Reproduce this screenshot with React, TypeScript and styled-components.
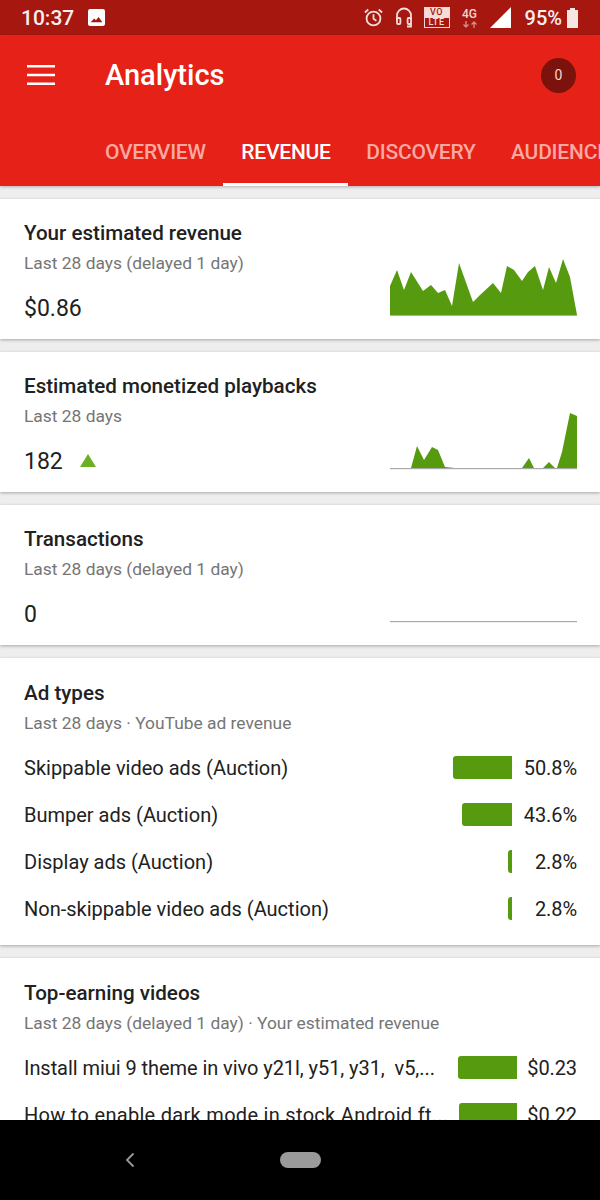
import React from 'react'
import styled, {createGlobalStyle} from 'styled-components'

const GlobalStyle = createGlobalStyle`
  html, body {
    margin: 0;
    padding: 0;
    background: #000;
  }
  * {
    box-sizing: border-box;
  }
`

const GREEN = '#569a10'

const revenuePoints = '0,31 7,15 14,35 21,17 33,36 41,30 48,38 55,35 62,51 69,8 83,47 90,40 103,28 111,38 117,11 124,15 132,26 138,17 145,11 153,35 159,12 166,28 173,4 180,22 187,60 0,60'
const playbackPoints = '21,60 27,38 34,52 42,39 48,42 55,59 65,60 21,60 132,60 139,50 144,60 132,60 153,60 159,54 165,60 153,60 167,60 172,44 180,5 187,8 187,60 167,60'

const adTypes = [
  {name: 'Skippable video ads (Auction)', width: 59, value: '50.8%'},
  {name: 'Bumper ads (Auction)', width: 50, value: '43.6%'},
  {name: 'Display ads (Auction)', width: 4, value: '2.8%'},
  {name: 'Non-skippable video ads (Auction)', width: 4, value: '2.8%'},
]

const videos = [
  {name: 'Install miui 9 theme in vivo y21l, y51, y31,  v5,...', width: 59, value: '$0.23', tracking: -0.06},
  {name: 'How to enable dark mode in stock Android ft...', width: 58, value: '$0.22', tracking: 0.3},
]

export default function App() {
  return <Page>
    <GlobalStyle/>
    <StatusBar>
      <StatusGroup>
        <Clock>10:37</Clock>
        <svg width="17" height="17" viewBox="0 0 16 16">
          <path fill="#fff" fillRule="evenodd" d="M2 0h12a2 2 0 0 1 2 2v12a2 2 0 0 1-2 2H2a2 2 0 0 1-2-2V2a2 2 0 0 1 2-2zM2.500 12.500h11L10 7.500l-2.500 3.200-1.700-1.700z"/>
        </svg>
      </StatusGroup>
      <StatusIcons>
        <svg width="21" height="21" viewBox="0 0 20 20" fill="none" stroke="#f3dcd9" strokeWidth="1.7">
          <circle cx="10" cy="11" r="6.600"/>
          <path d="M10 7v4.200l2.800 1.800M1.800 5.200 5 2.400M18.200 5.200 15 2.400"/>
        </svg>
        <svg width="18" height="22" viewBox="0 0 18 22" fill="none" stroke="#f3dcd9" strokeWidth="1.8">
          <path d="M2 13V8.500a7 7 0 0 1 14 0V13"/>
          <rect x="2" y="11" width="3.400" height="6" rx="1"/>
          <rect x="12.600" y="11" width="3.400" height="6" rx="1"/>
          <path d="M16 16v3.500h-4"/>
        </svg>
        <Volte>
          <VolteTop>VO</VolteTop>
          <VolteBottom>LTE</VolteBottom>
        </Volte>
        <Network>
          <span>4G</span>
          <svg width="16" height="7" viewBox="0 0 16 7" fill="none" stroke="#cf8d86" strokeWidth="1.4">
            <path d="M4 0v6M1.500 3.500 4 6l2.500-2.500M12 7V1M9.500 3.500 12 1l2.500 2.500"/>
          </svg>
        </Network>
        <svg width="21" height="21" viewBox="0 0 21 21">
          <path fill="#fff" d="M21 0v21H0z"/>
        </svg>
        <Battery>
          <span>95%</span>
          <svg width="11" height="20" viewBox="0 0 11 20">
            <path fill="#f5e6e4" d="M3 0h5v2h3v18H0V2h3z"/>
          </svg>
        </Battery>
      </StatusIcons>
    </StatusBar>

    <Header>
      <TitleRow>
        <MenuIcon width="28" height="20" viewBox="0 0 28 20">
          <path fill="#fff" d="M0 0h28v2.600H0zM0 8.700h28v2.600H0zM0 17.400h28V20H0z"/>
        </MenuIcon>
        <Title>Analytics</Title>
        <Badge>0</Badge>
      </TitleRow>
      <Tabs>
        <Tab>OVERVIEW</Tab>
        <Tab $active>REVENUE</Tab>
        <Tab>DISCOVERY</Tab>
        <Tab>AUDIENCE</Tab>
      </Tabs>
    </Header>

    <Content>
      <Card>
        <CardText>
          <CardTitle>Your estimated revenue</CardTitle>
          <CardSub>Last 28 days (delayed 1 day)</CardSub>
          <CardValue>$0.86</CardValue>
        </CardText>
        <Chart width="187" height="62" viewBox="0 0 187 62">
          <polygon fill={GREEN} points={revenuePoints}/>
          <rect y="60" width="187" height="1" fill="#9dc46f"/>
        </Chart>
      </Card>

      <Card>
        <CardText>
          <CardTitle>Estimated monetized playbacks</CardTitle>
          <CardSub>Last 28 days</CardSub>
          <CardValue>
            182
            <Trend width="16" height="13" viewBox="0 0 16 13">
              <path fill="#6ab023" d="M8 0l8 13H0z"/>
            </Trend>
          </CardValue>
        </CardText>
        <Chart width="187" height="62" viewBox="0 0 187 62">
          <rect y="60" width="187" height="1.200" fill="#aaa"/>
          <polygon fill={GREEN} points={playbackPoints}/>
        </Chart>
      </Card>

      <Card>
        <CardText>
          <CardTitle>Transactions</CardTitle>
          <CardSub>Last 28 days (delayed 1 day)</CardSub>
          <CardValue>0</CardValue>
        </CardText>
        <Chart width="187" height="62" viewBox="0 0 187 62">
          <rect y="60" width="187" height="1.200" fill="#aaa"/>
        </Chart>
      </Card>

      <ListCard>
        <CardTitle>Ad types</CardTitle>
        <CardSub>Last 28 days · YouTube ad revenue</CardSub>
        <List>
          {adTypes.map(item => <Row key={item.name}>
            <RowName>{item.name}</RowName>
            <Bar style={{width: item.width}}/>
            <RowValue>{item.value}</RowValue>
          </Row>)}
        </List>
      </ListCard>

      <ListCard>
        <CardTitle>Top-earning videos</CardTitle>
        <CardSub>Last 28 days (delayed 1 day) · Your estimated revenue</CardSub>
        <List>
          {videos.map(item => <Row key={item.name}>
            <RowName $tracking={item.tracking}>{item.name}</RowName>
            <Bar style={{width: item.width}}/>
            <VideoValue>{item.value}</VideoValue>
          </Row>)}
        </List>
      </ListCard>
    </Content>

    <NavBar>
      <svg width="12" height="16" viewBox="0 0 12 16" fill="none" stroke="#9a9a9a" strokeWidth="1.8">
        <path d="M9.500 1.500 3 8l6.500 6.500"/>
      </svg>
      <HomePill/>
    </NavBar>
  </Page>
}

const Page = styled.div`
  width: 600px;
  height: 1200px;
  display: flex;
  flex-direction: column;
  overflow: hidden;
  background: #eeeeee;
  font-family: Roboto, "Liberation Sans", sans-serif;
  color: #212121;
`

const StatusBar = styled.div`
  height: 35px;
  flex: none;
  padding: 0 22px 0 21px;
  display: flex;
  align-items: center;
  justify-content: space-between;
  background: #a5170f;
  color: #fff;
`

const StatusGroup = styled.div`
  display: flex;
  align-items: center;
  gap: 14px;
`

const Clock = styled.span`
  font-size: 21px;
  font-weight: 500;
  color: #f7eeed;
`

const StatusIcons = styled.div`
  display: flex;
  align-items: center;
  gap: 11px;
`

const Volte = styled.div`
  width: 26px;
  height: 21px;
  display: flex;
  flex-direction: column;
  border: 1px solid #f0d5d2;
  font-size: 9px;
  font-weight: 500;
  line-height: 9px;
  letter-spacing: 0.6px;
  text-align: center;
`

const VolteTop = styled.div`
  flex: 1;
  background: #f3dcd9;
  color: #a5170f;
`

const VolteBottom = styled.div`
  flex: 1;
  color: #f3dcd9;
`

const Network = styled.div`
  width: 18px;
  display: flex;
  flex-direction: column;
  align-items: center;
  font-size: 12px;
  font-weight: 500;
  line-height: 13px;
  color: #f0d5d2;
`

const Battery = styled.div`
  margin-left: 3px;
  display: flex;
  align-items: center;
  gap: 5px;
  font-size: 20px;
  font-weight: 500;
  color: #f7eeed;
`

const Header = styled.header`
  height: 151px;
  flex: none;
  display: flex;
  flex-direction: column;
  background: #e62117;
  box-shadow: 0 1px 3px rgba(0, 0, 0, 0.25);
  position: relative;
`

const TitleRow = styled.div`
  height: 80px;
  padding: 0 24px 0 27px;
  display: flex;
  align-items: center;
`

const MenuIcon = styled.svg`
  flex: none;
  margin-bottom: 1px;
`

const Title = styled.h1`
  margin: 0 0 0 50px;
  flex: 1;
  font-size: 29px;
  font-weight: 500;
  color: #fff;
`

const Badge = styled.div`
  width: 35px;
  height: 35px;
  display: flex;
  align-items: center;
  justify-content: center;
  border-radius: 50%;
  background: #7c120c;
  color: #f2d8d6;
  font-size: 14px;
  font-weight: 400;
`

const Tabs = styled.nav`
  flex: 1;
  padding-left: 87px;
  display: flex;
  overflow: hidden;
`

const Tab = styled.div<{$active?: boolean}>`
  flex: none;
  padding: 25px 17.5px 0 18px;
  border-bottom: 3px solid ${p => p.$active ? '#fff' : 'transparent'};
  font-size: 21px;
  font-weight: 500;
  letter-spacing: -0.22px;
  color: ${p => p.$active ? '#fff' : '#f9a8a2'};
`

const Content = styled.main`
  flex: 1;
  min-height: 0;
  padding-top: 13px;
  display: flex;
  flex-direction: column;
  gap: 13px;
  overflow: hidden;
`

const Card = styled.section`
  height: 140px;
  flex: none;
  padding: 0 23px 22px 24px;
  display: flex;
  align-items: flex-end;
  justify-content: space-between;
  background: #fff;
  box-shadow: 0 1px 3px rgba(0, 0, 0, 0.3);
`

const CardText = styled.div`
  align-self: flex-start;
  padding-top: 21px;
`

const CardTitle = styled.h2`
  margin: 0;
  font-size: 20.6px;
  line-height: 26px;
  font-weight: 500;
  color: #212121;
`

const CardSub = styled.div`
  margin-top: 7px;
  font-size: 17.4px;
  line-height: 20px;
  color: #757575;
`

const CardValue = styled.div`
  margin-top: 22px;
  display: flex;
  align-items: center;
  gap: 17px;
  font-size: 23px;
  line-height: 28px;
`

const Trend = styled.svg`
  flex: none;
  margin-bottom: 3px;
`

const Chart = styled.svg`
  flex: none;
  display: block;
`

const ListCard = styled.section`
  flex: none;
  padding: 22px 23px 13px 24px;
  background: #fff;
  box-shadow: 0 1px 3px rgba(0, 0, 0, 0.3);
`

const List = styled.div`
  margin-top: 11px;
  display: flex;
  flex-direction: column;
`

const Row = styled.div`
  height: 47px;
  display: flex;
  align-items: center;
`

const RowName = styled.div<{$tracking?: number}>`
  flex: 1;
  min-width: 0;
  white-space: pre;
  font-size: 20px;
  font-weight: 400;
  letter-spacing: ${p => p.$tracking ?? 0}px;
`

const Bar = styled.div`
  height: 23px;
  flex: none;
  border-radius: 3px 0 0 3px;
  background: ${GREEN};
`

const RowValue = styled.div`
  width: 65px;
  flex: none;
  text-align: right;
  font-size: 20px;
  letter-spacing: -0.1px;
`

const VideoValue = styled(RowValue)`
  width: 60px;
`

const NavBar = styled.div`
  height: 80px;
  flex: none;
  padding-left: 124px;
  display: flex;
  align-items: center;
  gap: 144px;
  background: #000;
`

const HomePill = styled.div`
  width: 41px;
  height: 16px;
  border-radius: 8px;
  background: #9a9a9a;
`
